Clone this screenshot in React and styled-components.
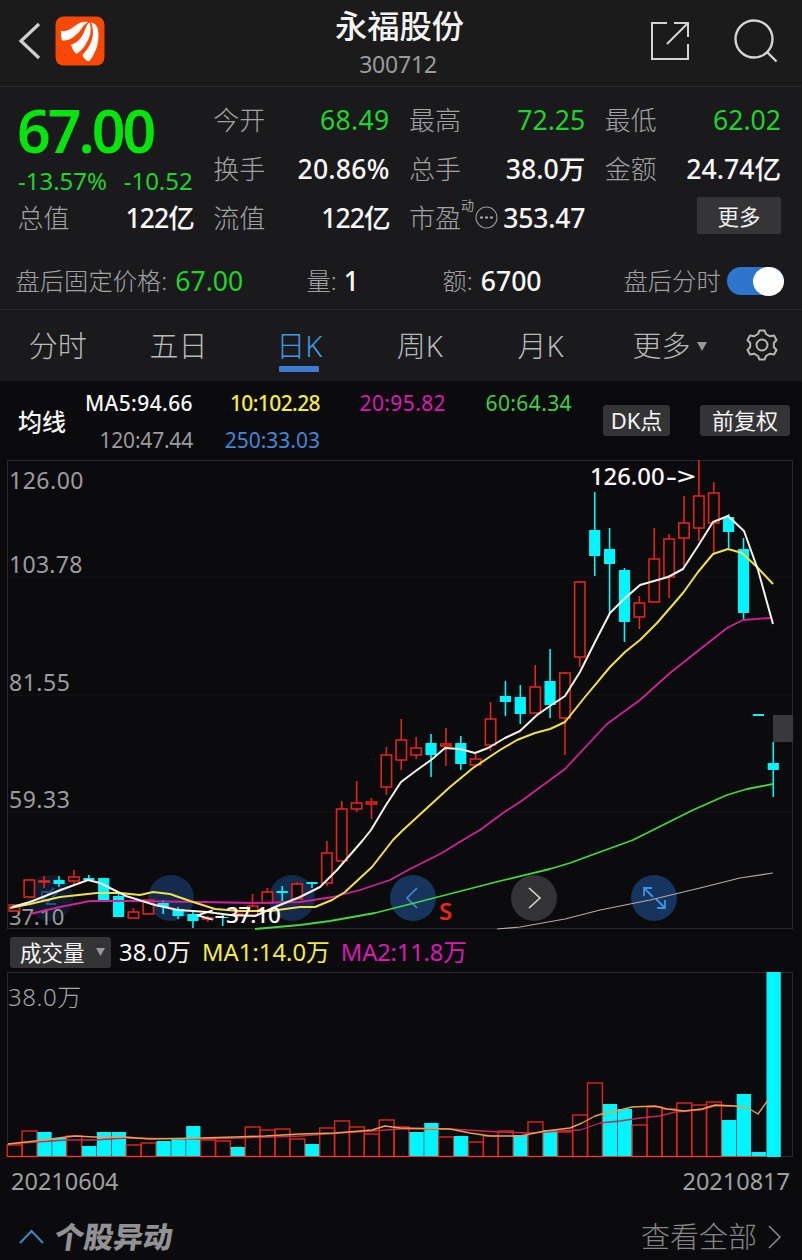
import React from "react";
import styled, { createGlobalStyle } from "styled-components";

const Global = createGlobalStyle`
  * { box-sizing: border-box; }
  body {
    margin: 0;
    background: #0b0b0d;
    color: #f4f4f4;
    font-family: "Noto Sans", "Noto Sans CJK SC", sans-serif;
  }
  svg { display: block; flex: none; overflow: visible; }
`;

const GREEN = "#1fd42a";
const RED = "#e0251c";
const CYAN = "#00f6ff";
const YELLOW = "#f3ea4e";
const PINK = "#d81bb4";
const BLUE = "#4486d8";

const Screen = styled.main`
  width: 802px;
  height: 1260px;
  overflow: hidden;
  display: flex;
  flex-direction: column;
  white-space: nowrap;
`;

const Header = styled.header`
  height: 87px;
  flex: none;
  background: #1a1b1a;
  border-bottom: 1px solid #2c2c2b;
  display: grid;
  grid-template-columns: 200px 1fr 199px;
  padding: 0 24px 0 18px;
`;
const HeaderLeft = styled.div`
  display: flex;
  align-items: center;
  gap: 14px;
  padding-bottom: 4px;
`;
const HeaderRight = styled(HeaderLeft)`
  justify-content: flex-end;
  gap: 44px;
`;
const Title = styled.div`
  text-align: center;
  padding-top: 3px;
  h1 {
    margin: 0 -2px 0 0;
    font-size: 32.3px;
    font-weight: 500;
    line-height: 44px;
  }
  p {
    margin: 1px 1px 0 0;
    font-size: 23px;
    line-height: 32px;
    color: #9b9b9b;
    font-weight: 400;
    letter-spacing: -0.2px;
  }
`;

const Quote = styled.section`
  height: 223px;
  flex: none;
  background: #1a1a1c;
  border-bottom: 1px solid #29292b;
`;
const StatGrid = styled.div`
  display: grid;
  grid-template-columns: repeat(4, 1fr);
  grid-auto-rows: 49px;
  column-gap: 20px;
  padding: 8px 21px 0 18px;
`;
const PriceBlock = styled.div`
  grid-row: span 2;
`;
const Price = styled.div`
  font-size: 59px;
  line-height: 70px;
  height: 72px;
  font-weight: 600;
  letter-spacing: -3px;
  margin-left: -1px;
  color: #05e50c;
`;
const Change = styled.div`
  display: flex;
  justify-content: space-between;
  font-size: 24px;
  line-height: 28px;
  color: ${GREEN};
  margin-right: 1px;
`;
const Stat = styled.div`
  display: flex;
  align-items: center;
  justify-content: space-between;
`;
const Label = styled.span`
  font-size: 26px;
  line-height: 36px;
  font-weight: 300;
  color: #a2a2a4;
  margin-left: -0.5px;
`;
const Value = styled.span`
  font-size: 26.6px;
  line-height: 36px;
  letter-spacing: ${(p) => p.$ls || 0}px;
  font-weight: ${(p) => (p.$down ? 400 : 500)};
  color: ${(p) => (p.$down ? GREEN : "#f8f8f8")};
`;
const PeTag = styled.sup`
  font-size: 13px;
  line-height: 14px;
  color: #a2a2a4;
  margin: -25px -4px 0 -5px;
`;
const MoreButton = styled.button`
  justify-self: end;
  align-self: center;
  width: 84px;
  height: 37px;
  margin: -4px 0 0 0;
  padding: 0;
  border: 0;
  border-radius: 2px;
  background: #353537;
  color: #f0f0f0;
  font: 400 21.5px/34px "Noto Sans CJK SC", sans-serif;
`;
const AfterHours = styled.div`
  display: flex;
  align-items: center;
  height: 58px;
  margin-top: 10px;
  padding: 0 16px 0 16px;
`;
const AfterItem = styled.div`
  width: ${(p) => p.$w}px;
  display: flex;
  gap: ${(p) => p.$gap}px;
  align-items: center;
  & > span:first-child { font-size: 24.3px; }
  & > span + span { font-size: 26.6px; }
`;
const Toggle = styled.div`
  width: 57px;
  height: 28px;
  border-radius: 14px;
  background: #2c76cd;
  display: flex;
  justify-content: flex-end;
  align-items: center;
  &::after {
    content: "";
    width: 31px;
    height: 29px;
    border-radius: 50%;
    background: #fff;
  }
`;

const Tabs = styled.nav`
  height: 71px;
  flex: none;
  background: #1a1a1c;
  display: flex;
  align-items: flex-start;
  padding-top: 15px;
`;
const Tab = styled.div`
  width: 120.7px;
  flex: none;
  position: relative;
  left: -2.5px;
  display: flex;
  flex-direction: column;
  align-items: center;
  font-size: 29px;
  font-weight: 300;
  line-height: 42px;
  color: ${(p) => (p.$on ? "#3f9be4" : "#b9b9ba")};
  &::after {
    content: "";
    width: 40px;
    height: 6px;
    border-radius: 1px;
    margin: -1px 1px 0 0;
    background: ${(p) => (p.$on ? "#3b7bd0" : "transparent")};
  }
`;
const MoreTab = styled.div`
  display: flex;
  align-items: center;
  gap: 7px;
  margin-left: 29px;
  margin-right: 39px;
  font-size: 29px;
  font-weight: 300;
  line-height: 42px;
  color: #b9b9ba;
`;
const SettingsButton = styled.div`
  padding-top: 3px;
`;

const Averages = styled.section`
  height: 79px;
  flex: none;
  display: flex;
  align-items: center;
  padding: 0 12px 0 18px;
`;
const AvgTitle = styled.div`
  width: 48px;
  font-size: 24px;
  font-weight: 500;
`;
const AvgGrid = styled.div`
  display: grid;
  grid-template-columns: 127px 127px 126px 126px;
  grid-auto-rows: 37px;
  justify-items: end;
  align-items: center;
  height: 74px;
  margin-top: 1px;
`;
const Avg = styled.span`
  font-size: 21px;
  line-height: 30px;
  letter-spacing: ${(p) => p.$ls ?? 0.4}px;
  font-weight: ${(p) => p.$w || 400};
  color: ${(p) => p.$c};
`;
const Chip = styled.button`
  width: ${(p) => p.$w}px;
  height: 31px;
  flex: none;
  margin-left: ${(p) => p.$ml}px;
  margin-top: -1px;
  padding: 0;
  border: 0;
  border-radius: 3px;
  background: #343436;
  color: #f6f6f6;
  font: 400 22px/29px "Noto Sans", "Noto Sans CJK SC", sans-serif;
`;

const Chart = styled.section`
  height: ${(p) => p.$h}px;
  flex: none;
`;

const VolumeBar = styled.div`
  height: 43px;
  flex: none;
  display: flex;
  align-items: center;
  gap: 11px;
  padding: 3px 0 0 10px;
  font-size: 23.8px;
  line-height: 31px;
`;
const VolumeSelect = styled.div`
  width: 101px;
  height: 31px;
  margin-right: -3px;
  border-radius: 3px;
  background: #343436;
  font-size: 21.5px;
  display: flex;
  align-items: center;
  justify-content: space-between;
  padding: 0 6px 0 10px;
`;
const VolumeText = styled.span`
  color: ${(p) => p.$c};
  letter-spacing: ${(p) => p.$ls || 0}px;
`;

const Dates = styled.div`
  height: 44px;
  flex: none;
  display: flex;
  align-items: center;
  justify-content: space-between;
  padding: 0 12px 0 11px;
  font-size: 23.5px;
  color: #a0a0a1;
`;
const Footer = styled.footer`
  flex: 1;
  display: flex;
  align-items: center;
  padding: 10px 21px 0 19px;
`;
const FooterTitle = styled.strong`
  font-family: "Noto Sans CJK SC", sans-serif;
  font-weight: 900;
  font-size: 29.5px;
  line-height: 40px;
  color: #929294;
  margin: -4px auto 0 11px;
  transform: skewX(-8deg);
`;
const ViewAll = styled.span`
  font-size: 29px;
  line-height: 40px;
  font-weight: 300;
  color: #858587;
  margin-right: 11px;
`;

const STEP = 14.88;
const cx = (i) => 14.4 + STEP * i;

// [up, high, bodyTop, bodyBottom, low]
const CANDLES = [
  [1, 905, 905, 911, 911], [1, 879, 880, 897, 897], [1, 876, 881, 882, 888], [0, 876, 880, 884, 887],
  [1, 870, 877, 881, 884], [0, 875, 878, 880, 881], [0, 878, 878, 900, 900], [0, 894, 896, 917, 917],
  [1, 908, 912, 918, 918], [1, 900, 900, 914, 914], [0, 900, 903, 907, 914], [0, 907, 909, 916, 919],
  [0, 911, 914, 921, 928], [1, 916, 918, 919, 922], [0, 914, 917, 918, 926], [1, 912, 914, 915, 918],
  [1, 894, 906, 915, 917], [1, 888, 892, 903, 903], [0, 886, 891, 893, 901], [1, 882, 884, 899, 899],
  [0, 882, 882, 884, 888], [1, 841, 853, 883, 886], [1, 801, 809, 861, 861], [1, 781, 803, 809, 812],
  [1, 798, 802, 804, 819], [1, 747, 755, 787, 795], [1, 719, 740, 760, 770], [1, 737, 748, 755, 759],
  [0, 734, 743, 755, 777], [1, 728, 744, 746, 766], [0, 736, 743, 764, 770], [1, 753, 759, 765, 765],
  [1, 702, 719, 745, 751], [0, 681, 696, 702, 716], [0, 685, 697, 714, 724], [1, 665, 687, 713, 713],
  [0, 649, 681, 705, 718], [1, 672, 673, 718, 755], [1, 581, 582, 657, 667], [0, 492, 530, 556, 576],
  [0, 528, 549, 564, 614], [0, 568, 570, 622, 642], [1, 596, 603, 617, 629], [1, 528, 559, 602, 602],
  [1, 534, 539, 577, 598], [1, 496, 523, 538, 568], [1, 460, 496, 528, 541], [1, 482, 493, 523, 553],
  [0, 514, 517, 532, 548], [0, 538, 549, 613, 620], [0, 714, 714, 716, 716], [0, 742, 763, 770, 797],
];

// top edge of every volume bar; negative marks a falling day
const VOLUMES = [
  1145, 1131, -1132, -1138, 1136, -1146, -1132, -1132, 1145, 1143, -1141, -1138, -1126, 1140, 1141, -1147,
  1127, 1130, 1129, 1139, -1144, 1128, 1121, 1127, 1134, 1120, 1127, -1132, -1123, 1137, -1136, 1142,
  1136, 1131, -1135, 1122, -1130, 1132, 1115, 1083, -1104, -1109, 1125, 1107, 1109, 1103, 1105, 1102,
  -1120, -1094, -1152, -972,
];

const MA5 = "12,907 30,902 58,891 88,880 100,883 126,896 155,905 178,910 207,912 230,915 255,916 275,907 300,897 320,887 337,870 363,840 371,830 386,805 401,782 417,770 431,760 445,748 460,749 475,753 488,748 505,738 520,731 537,715 550,706 565,696 580,672 595,642 610,613 623,600 640,585 654,581 668,577 683,569 698,546 713,522 728,516 744,531 758,570 773,624";
const MA10 = "10,908 30,904 60,897 97,893 120,893 140,895 153,892 170,894 190,901 215,909 240,911 270,911 300,907 315,907 332,900 345,892 372,867 393,840 402,831 427,808 450,787 473,768 500,750 517,740 535,733 550,729 565,722 585,697 610,667 625,652 640,640 657,623 683,593 698,572 713,554 728,549 742,553 757,567 773,584";
const MA20 = "30,914 60,907 90,901 130,901 200,902 255,903 300,902 333,897 360,890 390,880 410,869 440,854 463,840 480,830 503,813 520,802 565,769 607,724 640,700 670,673 727,628 743,620 770,618";
const MA60 = "255,929 300,925 330,921 375,913 430,899 500,881 550,869 570,863 600,852 633,840 693,810 727,795 747,789 773,784";
const MA120 = "497,929 520,927 565,919 600,910 650,900 700,888 740,878 773,873";
const V_FAST = "8,1144 35,1141 66,1137 75,1136 95,1137 125,1137 150,1139 200,1138 235,1137 265,1136 300,1134 335,1133 372,1130 385,1126 400,1128 450,1129 470,1133 490,1136 520,1136 545,1131 570,1128 582,1123 595,1116 602,1114 620,1110 632,1107 655,1106 667,1109 684,1111 702,1109 715,1105 735,1106 748,1108 758,1114 768,1100";
const V_SLOW = "8,1144 66,1140 95,1140 125,1138 200,1139 240,1138 300,1136 340,1133 372,1131 400,1129 450,1129 500,1132 530,1133 560,1131 580,1130 600,1123 620,1121 640,1118 660,1116 675,1112 700,1110 715,1106 735,1106";

function Line({ points, color, width = 2 }) {
  return <polyline points={points} fill="none" stroke={color} strokeWidth={width} strokeLinejoin="round" />;
}

function Candle({ i, data }) {
  const [up, high, top, bottom, low] = data;
  const x = cx(i);
  const color = up ? RED : CYAN;
  return (
    <g stroke={color} strokeWidth="1.6">
      {high < top && <line x1={x} x2={x} y1={high} y2={top} />}
      {low > bottom && <line x1={x} x2={x} y1={bottom} y2={low} />}
      {up ? (
        <rect x={x - 5.2} y={top} width="10.4" height={bottom - top} fill="#0b0b0d" />
      ) : (
        <rect x={x - 5.6} y={top} width="11.2" height={bottom - top} fill={CYAN} stroke="none" />
      )}
    </g>
  );
}

function PriceChart() {
  return (
    <svg width="802" height="469" viewBox="0 460 802 469" fontFamily='"Noto Sans", sans-serif'>
      <rect x="7.5" y="460.5" width="785" height="468" fill="none" stroke="#2a2a2d" />
      {[577, 695, 812].map((y) => (
        <line key={y} x1="8" x2="792" y1={y} y2={y} stroke="#141416" />
      ))}
      <circle cx="50" cy="898" r="23" fill="#0f1a2c" />
      <path d="M62 888 46 904M54 888l-12 12M50 892h-8v8M46 904h10" stroke="#245084" strokeWidth="1.8" fill="none" />
      <circle cx="171" cy="898" r="23" fill="#142b4d" />
      <circle cx="292" cy="898" r="23" fill="#142b4d" />
      <circle cx="413" cy="898" r="23" fill="#16345c" />
      <circle cx="534" cy="898" r="23" fill="#333335" />
      <circle cx="654" cy="898" r="23" fill="#16345c" />
      <path d="M417 888l-10 10 10 10" stroke="#3d8ee0" strokeWidth="1.6" fill="none" />
      <path d="M529 888l11 10-11 10" stroke="#d6d6d6" strokeWidth="1.6" fill="none" />
      <path d="M644 896v-8h8M644 888l9 9M665 900v8h-8M665 908l-9-9" stroke="#3b93e6" strokeWidth="1.8" fill="none" />
      <g fill="#9c9c9e" fontSize="23" letterSpacing="0.5">
        <text x="9" y="489">126.00</text>
        <text x="9" y="573" letterSpacing="0.3">103.78</text>
        <text x="9" y="691">81.55</text>
        <text x="9" y="808">59.33</text>
        <text x="9" y="925" fontSize="22" letterSpacing="-0.2">37.10</text>
      </g>
      {CANDLES.map((c, i) => <Candle key={i} i={i} data={c} />)}
      <Line points={MA120} color="#b9a9ad" width={1.2} />
      <Line points={MA60} color="#45d63f" width={1.8} />
      <Line points={MA20} color="#cf2398" width={1.8} />
      <Line points={MA10} color="#efe04d" />
      <Line points={MA5} color="#f7f1e8" />
      <g fill="#fafafa" fontSize="23.8" fontWeight="500">
        <text x="590" y="485">126.00</text>
        <text x="666" y="485" textLength="30" lengthAdjust="spacingAndGlyphs">-&gt;</text>
        <text x="195" y="923" fontSize="22.5" textLength="30" lengthAdjust="spacingAndGlyphs">&lt;-</text>
        <text x="226" y="923" fontSize="22.5" letterSpacing="-0.7">37.10</text>
      </g>
      <text x="439" y="920" fontSize="24" fontWeight="600" fill="#f02318">S</text>
      <rect x="773" y="715" width="20" height="27" fill="#39393c" />
    </svg>
  );
}

function VolumeChart() {
  return (
    <svg width="802" height="187" viewBox="0 972 802 187" fontFamily='"Noto Sans", "Noto Sans CJK SC", sans-serif'>
      <rect x="7.5" y="972.5" width="785" height="184" fill="none" stroke="#2a2a2d" />
      <text x="8" y="1006" fontSize="24" letterSpacing="0.6" fontWeight="300" fill="#a6a6a8">38.0万</text>
      {VOLUMES.map((v, i) => {
        const x = 7.2 + STEP * i;
        const y = Math.abs(v);
        return v < 0 ? (
          <rect key={i} x={x + 0.4} y={y} width="14.3" height={1157 - y} fill={CYAN} />
        ) : (
          <rect key={i} x={x} y={y} width={STEP} height={1156.5 - y} fill="none" stroke={RED} strokeWidth="1.4" />
        );
      })}
      <line x1="7" x2="766" y1="1156.5" y2="1156.5" stroke="#e8402c" strokeWidth="1.2" />
      <Line points={V_SLOW} color="#c22b55" width={1.3} />
      <Line points={V_FAST} color="#e8a14c" width={1.4} />
    </svg>
  );
}

const Caret = ({ size = 9, color = "#98989a" }) => (
  <svg width={size} height={size * 0.9} viewBox="0 0 10 9"><path d="M0 0h10L5 9z" fill={color} /></svg>
);

const BackIcon = () => (
  <svg width="23" height="38" viewBox="0 0 23 38"><path d="M21 2 3 19l18 17" fill="none" stroke="#cfcfcf" strokeWidth="3.2" /></svg>
);
const Logo = () => (
  <svg width="50" height="50" viewBox="0 0 50 50">
    <rect x="0.5" y="0.5" width="49" height="49" rx="8" fill="#f94706" />
    <path d="M6 15C13 16 17 12 22 8.500 26 6 30 5.500 33 6 28 9 27 13 22 18 18 22 13 25 7 24.500 6 21 6 18 6 15z" fill="#fff" />
    <path d="M16 28.500C23 27 27 21 29.500 15 31 11 32 8 34.500 6.500 36.500 12 36 19 32.500 25 29.500 31 26 35 21.500 38 18 35 17 32 16 28.500z" fill="#fff" />
    <path d="M27.500 39C34 32 37.500 25 38 17 38 13 37 9 36 6.500 41 7 43.500 12 43.500 18 43.500 29 40.500 37 34.500 45 32 45.500 29 43 27.500 39z" fill="#fff" />
  </svg>
);
const ShareIcon = () => (
  <svg width="40" height="40" viewBox="0 0 40 40" fill="none" stroke="#d4d4d4" strokeWidth="2">
    <path d="M17 2H2v36h36V23M24 2h14v14M38 2 17 23" />
  </svg>
);
const SearchIcon = () => (
  <svg width="44" height="46" viewBox="0 0 44 46" fill="none" stroke="#d4d4d4" strokeWidth="2.4">
    <circle cx="20" cy="21" r="18.500" /><path d="M33 34l9.500 9.500" />
  </svg>
);
const DotsIcon = () => (
  <svg width="23" height="23" viewBox="0 0 23 23">
    <circle cx="11.5" cy="11.5" r="10.500" fill="none" stroke="#949496" strokeWidth="1.1" />
    <path d="M5 11.500h13" stroke="#a9a9ab" strokeWidth="1.800" strokeDasharray="3 2" />
  </svg>
);
const GearIcon = () => (
  <svg width="32" height="34" viewBox="0 0 32 34" fill="none" stroke="#b4b4b5" strokeWidth="2" strokeLinejoin="round">
    <path d="M13.500 2.500h5l1.500 3.500 4 2.300 4-.8 2.500 4.500-2.700 3v4l2.700 3-2.500 4.500-4-.8-4 2.300-1.500 3.500h-5L12 28l-4-2.300-4 .8L1.500 22l2.700-3v-4l-2.700-3L4 7.500l4 .8L12 6z" />
    <circle cx="16" cy="17" r="5.500" />
  </svg>
);

export default function App() {
  return (
    <Screen>
      <Global />
      <Header>
        <HeaderLeft><BackIcon /><Logo /></HeaderLeft>
        <Title><h1>永福股份</h1><p>300712</p></Title>
        <HeaderRight><ShareIcon /><SearchIcon /></HeaderRight>
      </Header>

      <Quote>
        <StatGrid>
          <PriceBlock>
            <Price>67.00</Price>
            <Change><span>-13.57%</span><span>-10.52</span></Change>
          </PriceBlock>
          <Stat><Label>今开</Label><Value $down $ls={0.3}>68.49</Value></Stat>
          <Stat><Label>最高</Label><Value $down>72.25</Value></Stat>
          <Stat><Label>最低</Label><Value $down>62.02</Value></Stat>
          <Stat><Label>换手</Label><Value $ls={0.2}>20.86%</Value></Stat>
          <Stat><Label>总手</Label><Value>38.0万</Value></Stat>
          <Stat><Label>金额</Label><Value>24.74亿</Value></Stat>
          <Stat><Label>总值</Label><Value $ls={-1}>122亿</Value></Stat>
          <Stat><Label>流值</Label><Value $ls={-1}>122亿</Value></Stat>
          <Stat><Label>市盈</Label><PeTag>动</PeTag><DotsIcon /><Value $ls={-0.2}>353.47</Value></Stat>
          <MoreButton>更多</MoreButton>
        </StatGrid>
        <AfterHours>
          <AfterItem $w={291} $gap={8}><Label>盘后固定价格:</Label><Value $down>67.00</Value></AfterItem>
          <AfterItem $w={136} $gap={7}><Label>量:</Label><Value>1</Value></AfterItem>
          <AfterItem $w={181} $gap={8}><Label>额:</Label><Value>6700</Value></AfterItem>
          <AfterItem $gap={6}><Label>盘后分时</Label><Toggle /></AfterItem>
        </AfterHours>
      </Quote>

      <Tabs>
        {["分时", "五日", "日K", "周K", "月K"].map((t) => <Tab key={t} $on={t === "日K"}>{t}</Tab>)}
        <MoreTab>更多<Caret size={10} /></MoreTab>
        <SettingsButton><GearIcon /></SettingsButton>
      </Tabs>

      <Averages>
        <AvgTitle>均线</AvgTitle>
        <AvgGrid>
          <Avg $c="#f6f6f6" $w={500}>MA5:94.66</Avg>
          <Avg $c={YELLOW} $w={500} $ls={-0.6}>10:102.28</Avg>
          <Avg $c={PINK}>20:95.82</Avg>
          <Avg $c="#40cf45">60:64.34</Avg>
          <Avg $c="#9b9b9d" $ls={-0.2}>120:47.44</Avg>
          <Avg $c={BLUE} $ls={0}>250:33.03</Avg>
        </AvgGrid>
        <Chip $w={67} $ml={31}>DK点</Chip>
        <Chip $w={90} $ml={30}>前复权</Chip>
      </Averages>

      <Chart $h={469}><PriceChart /></Chart>

      <VolumeBar>
        <VolumeSelect>成交量<Caret /></VolumeSelect>
        <VolumeText $c="#f4f4f4" $ls={0.2}>38.0万</VolumeText>
        <VolumeText $c={YELLOW}>MA1:14.0万</VolumeText>
        <VolumeText $c={PINK} $ls={-0.2}>MA2:11.8万</VolumeText>
      </VolumeBar>

      <Chart $h={187}><VolumeChart /></Chart>

      <Dates><span>20210604</span><span>20210817</span></Dates>

      <Footer>
        <svg width="25" height="15" viewBox="0 0 25 15"><path d="M1 14 12.500 2 24 14" fill="none" stroke="#3f83c9" strokeWidth="2" /></svg>
        <FooterTitle>个股异动</FooterTitle>
        <ViewAll>查看全部</ViewAll>
        <svg width="13" height="24" viewBox="0 0 13 24"><path d="M1 1l11 11L1 23" fill="none" stroke="#858587" strokeWidth="1.600" /></svg>
      </Footer>
    </Screen>
  );
}
